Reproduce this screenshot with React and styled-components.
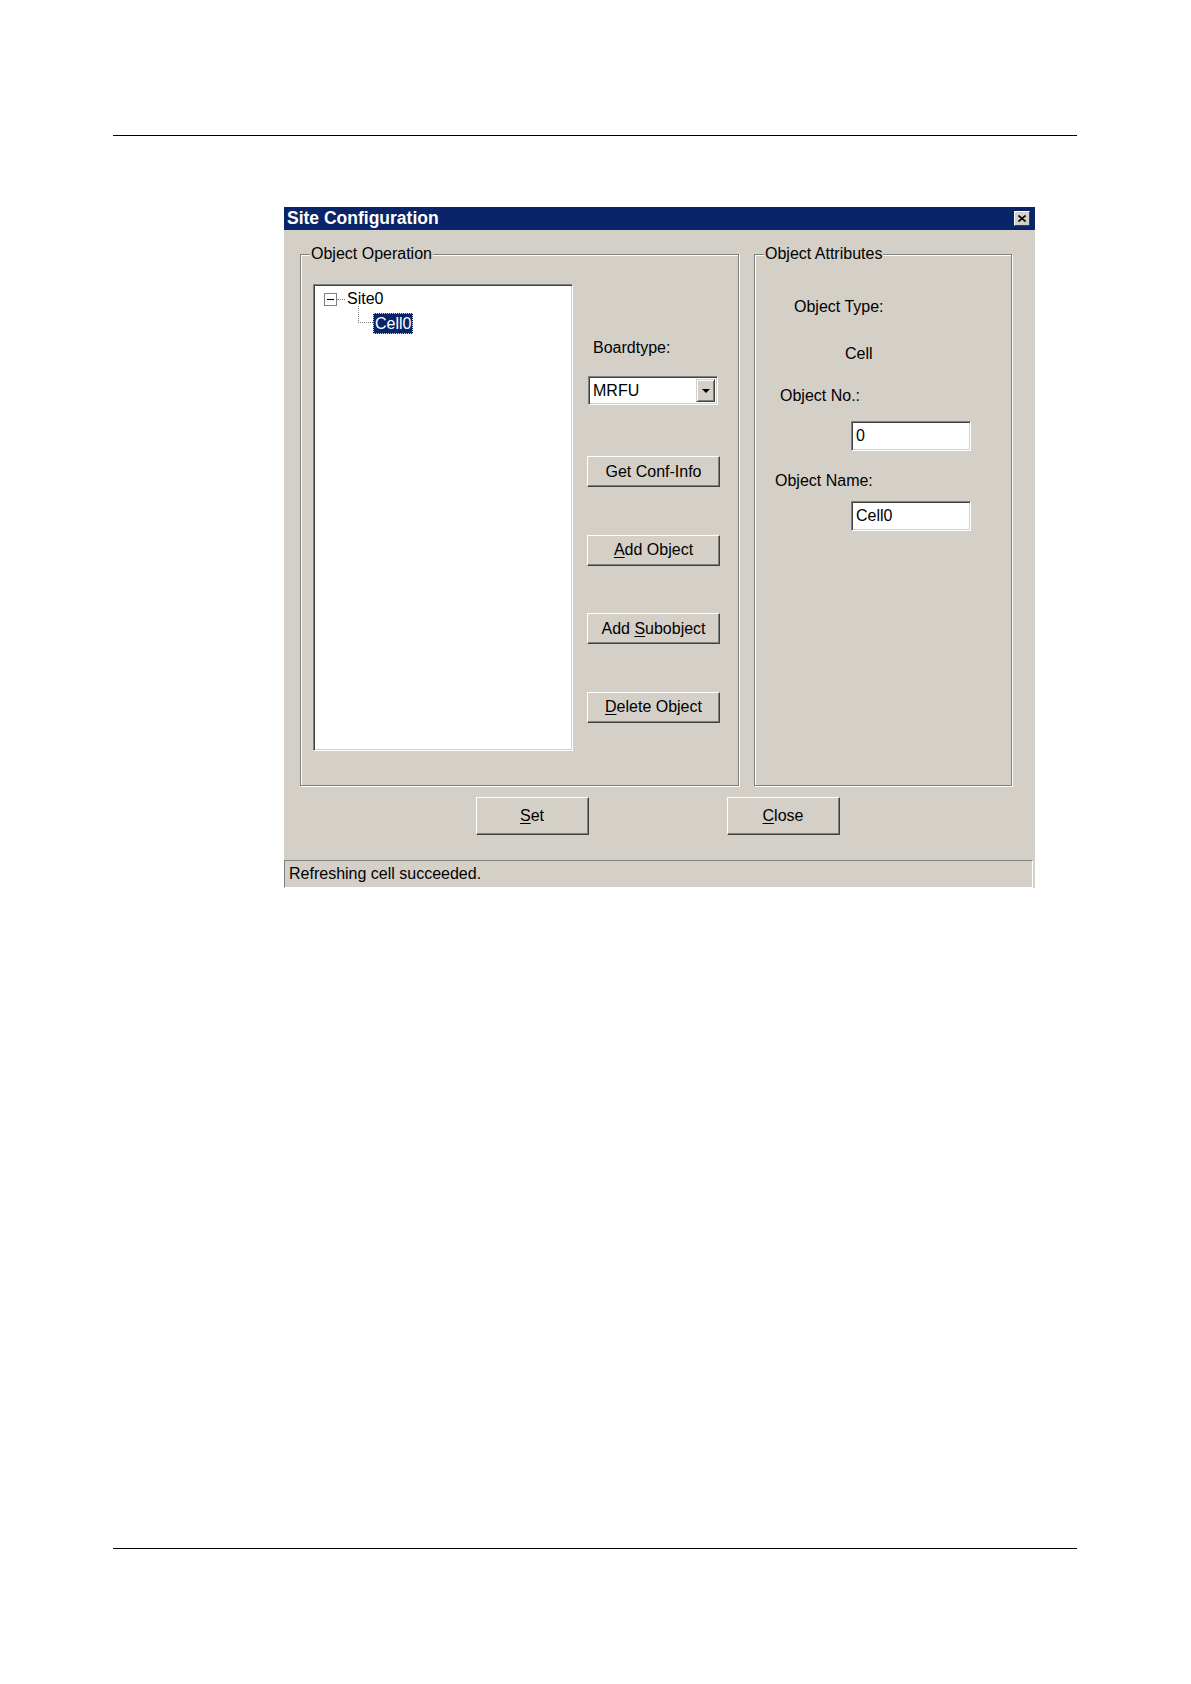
import React from "react";
import styled, { createGlobalStyle } from "styled-components";

const Global = createGlobalStyle`
  html, body { margin: 0; padding: 0; background: #fff; }
  body { font-family: "Liberation Sans", Arial, sans-serif; color: #000; }
`;

const FACE = "#d4d0c8";

const Page = styled.div`
  width: 1191px;
  min-height: 1684px;
  box-sizing: border-box;
  padding: 135px 109px 0 113px;
  display: flex;
  flex-direction: column;
`;

const Rule = styled.div`
  width: 964px;
  height: 1px;
  background: #000;
  margin-top: ${(p) => p.$top || 0}px;
`;

const Dialog = styled.div`
  margin: 71px 0 0 171px;
  width: 751px;
  background: ${FACE};
  display: flex;
  flex-direction: column;
  font-size: 16px;
`;

const TitleBar = styled.div`
  height: 23px;
  background: #0a246a;
  color: #fff;
  display: flex;
  align-items: center;
  justify-content: space-between;
  padding: 0 5px 0 3px;
  font-weight: bold;
  font-size: 17.5px;
`;

const TitleClose = styled.div`
  width: 16px;
  height: 15px;
  box-sizing: border-box;
  background: ${FACE};
  border: 1px solid;
  border-color: #fff #404040 #404040 #fff;
  display: flex;
  align-items: center;
  justify-content: center;
`;

const Body = styled.div`
  display: flex;
  gap: 15px;
  padding: 15px 23px 0 16px;
`;

const Group = styled.fieldset`
  margin: 0;
  padding: 0;
  min-width: 0;
  width: ${(p) => p.$w}px;
  height: 541px;
  box-sizing: border-box;
  border: 1px solid #808080;
  box-shadow: inset 1px 1px 0 #fff, 1px 1px 0 #fff;
`;

const Legend = styled.legend`
  margin-left: 9px;
  padding: 0 1px;
  font-size: 16px;
  line-height: 18px;
  background: ${FACE};
`;

const LeftInner = styled.div`
  display: grid;
  grid-template-columns: 260px 133px;
  column-gap: 14px;
  padding: 21px 0 0 12px;
`;

const Tree = styled.div`
  height: 467px;
  box-sizing: border-box;
  background: #fff;
  border: 1px solid;
  border-color: #808080 #fff #fff #808080;
  box-shadow: inset 1px 1px 0 #404040, inset -1px -1px 0 ${FACE};
  padding: 2px 0 0 10px;
`;

const TreeRow = styled.div`
  display: flex;
  align-items: center;
  height: 24px;
  padding-left: ${(p) => p.$indent || 0}px;
`;

const Expander = styled.div`
  width: 13px;
  height: 13px;
  box-sizing: border-box;
  border: 1px solid #808080;
  background: #fff;
  display: flex;
  align-items: center;
  justify-content: center;
  &::after {
    content: "";
    width: 7px;
    height: 1px;
    background: #000;
  }
`;

const HDots = styled.div`
  width: 8px;
  border-top: 1px dotted #808080;
`;

const LDots = styled.div`
  align-self: flex-start;
  margin-top: -5px;
  width: 15px;
  height: 17px;
  box-sizing: border-box;
  border-left: 1px dotted #808080;
  border-bottom: 1px dotted #808080;
`;

const NodeText = styled.span`
  padding: 0 2px;
  line-height: 20px;
  white-space: nowrap;
`;

const SelectedNode = styled.span`
  padding: 0 2px;
  line-height: 21px;
  background: #0a246a;
  color: #fff;
  outline: 1px dotted #e8d890;
  outline-offset: -1px;
  white-space: nowrap;
`;

const SideCol = styled.div`
  display: flex;
  flex-direction: column;
  align-items: flex-start;
`;

const Label = styled.div`
  line-height: 20px;
  margin-top: ${(p) => p.$top || 0}px;
  margin-left: ${(p) => p.$indent || 0}px;
  white-space: nowrap;
`;

const Sunken = styled.div`
  box-sizing: border-box;
  background: #fff;
  border: 1px solid;
  border-color: #808080 #fff #fff #808080;
  box-shadow: inset 1px 1px 0 #404040, inset -1px -1px 0 ${FACE};
`;

const Combo = styled(Sunken)`
  width: 130px;
  height: 29px;
  margin: 18px 0 0 1px;
  display: flex;
  align-items: stretch;
  padding: 2px;
`;

const ComboText = styled.div`
  flex: 1;
  display: flex;
  align-items: center;
  padding-left: 2px;
`;

const ComboBtn = styled.div`
  width: 19px;
  box-sizing: border-box;
  background: ${FACE};
  border: 1px solid;
  border-color: ${FACE} #404040 #404040 ${FACE};
  box-shadow: inset 1px 1px 0 #fff, inset -1px -1px 0 #808080;
  display: flex;
  align-items: center;
  justify-content: center;
  &::after {
    content: "";
    border-left: 4px solid transparent;
    border-right: 4px solid transparent;
    border-top: 4px solid #000;
  }
`;

const ButtonStack = styled.div`
  display: flex;
  flex-direction: column;
  gap: 47.5px;
  margin-top: 51px;
`;

const Button = styled.button`
  width: ${(p) => p.$w}px;
  height: ${(p) => p.$h}px;
  box-sizing: border-box;
  padding: 0;
  background: ${FACE};
  font-family: "Liberation Sans", Arial, sans-serif;
  font-size: 16px;
  color: #000;
  border: 1px solid;
  border-color: #fff #404040 #404040 #fff;
  box-shadow: inset -1px -1px 0 #808080, inset 1px 1px 0 ${FACE};
  display: flex;
  align-items: center;
  justify-content: center;
`;

const Accel = styled.span`
  text-decoration: underline;
  text-underline-offset: 2px;
`;

const RightInner = styled.div`
  display: flex;
  flex-direction: column;
  align-items: flex-start;
  padding-top: 34px;
`;

const Field = styled(Sunken)`
  width: 120px;
  height: 30px;
  margin-top: ${(p) => p.$top}px;
  margin-left: 96px;
  display: flex;
  align-items: center;
  padding-left: 4px;
`;

const ButtonRow = styled.div`
  display: flex;
  justify-content: center;
  gap: 138px;
  margin-top: 11px;
  padding-right: 4px;
`;

const StatusBar = styled.div`
  margin-top: 25px;
  height: 28px;
  box-sizing: border-box;
  border: 1px solid;
  border-color: #808080 #fff #fff #808080;
  margin-right: 2px;
  padding-left: 4px;
  display: flex;
  align-items: center;
`;

export default function App() {
  return (
    <>
      <Global />
      <Page>
        <Rule />
        <Dialog>
          <TitleBar>
            <span>Site Configuration</span>
            <TitleClose>
              <svg width="8" height="7" viewBox="0 0 8 7">
                <path d="M0.5 0.5 L7.5 6.5 M7.5 0.5 L0.5 6.5" stroke="#000" strokeWidth="1.6" />
              </svg>
            </TitleClose>
          </TitleBar>
          <Body>
            <Group $w={439}>
              <Legend>Object Operation</Legend>
              <LeftInner>
                <Tree>
                  <TreeRow>
                    <Expander />
                    <HDots />
                    <NodeText>Site0</NodeText>
                  </TreeRow>
                  <TreeRow $indent={34}>
                    <LDots />
                    <SelectedNode>Cell0</SelectedNode>
                  </TreeRow>
                </Tree>
                <SideCol>
                  <Label $top={54} $indent={6}>Boardtype:</Label>
                  <Combo>
                    <ComboText>MRFU</ComboText>
                    <ComboBtn />
                  </Combo>
                  <ButtonStack>
                    <Button $w={133} $h={31}>Get Conf-Info</Button>
                    <Button $w={133} $h={31}><Accel>A</Accel>dd Object</Button>
                    <Button $w={133} $h={31}>Add&nbsp;<Accel>S</Accel>ubobject</Button>
                    <Button $w={133} $h={31}><Accel>D</Accel>elete Object</Button>
                  </ButtonStack>
                </SideCol>
              </LeftInner>
            </Group>
            <Group $w={258}>
              <Legend>Object Attributes</Legend>
              <RightInner>
                <Label $indent={39}>Object Type:</Label>
                <Label $indent={90} $top={27}>Cell</Label>
                <Label $indent={25} $top={22}>Object No.:</Label>
                <Field $top={15}>0</Field>
                <Label $indent={20} $top={20}>Object Name:</Label>
                <Field $top={10}>Cell0</Field>
              </RightInner>
            </Group>
          </Body>
          <ButtonRow>
            <Button $w={113} $h={38}><Accel>S</Accel>et</Button>
            <Button $w={113} $h={38}><Accel>C</Accel>lose</Button>
          </ButtonRow>
          <StatusBar>Refreshing cell succeeded.</StatusBar>
        </Dialog>
        <Rule $top={660} />
      </Page>
    </>
  );
}
